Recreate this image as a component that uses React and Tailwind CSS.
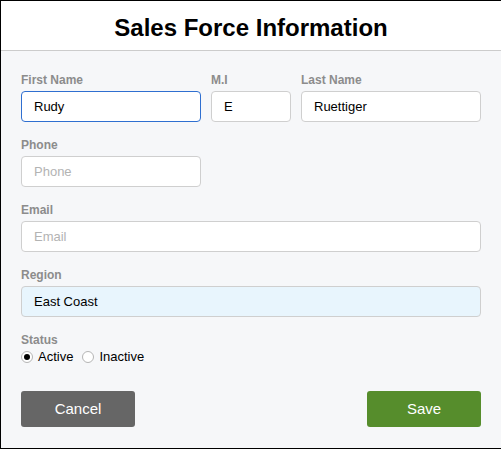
import { useState } from "react";

const labelCls = "block text-[12px] leading-[14px] font-bold text-[#8c8c8c] mb-1";
const inputCls =
  "block h-[31px] w-full rounded-[4px] border border-[#cfcfcf] bg-white px-[12px] text-[13px] text-black placeholder:text-[#b3b3b3] outline-none";

function Field({ label, className = "", inputClass = "", ...props }) {
  return (
    <div className={className}>
      <label className={labelCls}>{label}</label>
      <input className={`${inputCls} ${inputClass}`} {...props} />
    </div>
  );
}

function Radio({ checked, label, onClick }) {
  return (
    <button type="button" onClick={onClick} className="flex items-center gap-[5px]">
      <span className="flex h-[12px] w-[12px] items-center justify-center rounded-full border border-[#b5b5b5] bg-white">
        {checked && <span className="h-[6px] w-[6px] rounded-full bg-black" />}
      </span>
      <span className="text-[13px] leading-4 text-black">{label}</span>
    </button>
  );
}

export default function App() {
  const [status, setStatus] = useState("active");

  return (
    <div
      className="h-[449px] w-[501px] border-t border-l border-b border-black bg-[#f6f7f9]"
      style={{ fontFamily: '"Liberation Sans", Arial, sans-serif' }}
    >
      <div className="h-[50px] border-b border-[#cccccc] bg-white pt-[13px] text-center">
        <h1 className="text-[24px] leading-[28px] font-bold text-black">Sales Force Information</h1>
      </div>

      <div className="px-5 pt-[22px] pb-5">
        <div className="flex gap-[10px]">
          <Field label="First Name" className="w-[180px]" defaultValue="Rudy" inputClass="!border-[#2f6fd0]" />
          <Field label="M.I" className="w-[80px]" defaultValue="E" />
          <Field label="Last Name" className="w-[180px]" defaultValue="Ruettiger" />
        </div>

        <Field label="Phone" className="mt-4 w-[180px]" placeholder="Phone" />
        <Field label="Email" className="mt-4" placeholder="Email" />
        <Field label="Region" className="mt-4" defaultValue="East Coast" inputClass="!bg-[#e8f5fd]" />

        <div className="mt-4">
          <div className="text-[12px] leading-[14px] font-bold text-[#8c8c8c] mb-[2px]">Status</div>
          <div className="flex items-center gap-[9px]">
            <Radio checked={status === "active"} label="Active" onClick={() => setStatus("active")} />
            <Radio checked={status === "inactive"} label="Inactive" onClick={() => setStatus("inactive")} />
          </div>
        </div>

        <div className="mt-[26px] flex justify-between">
          <button className="h-[36px] w-[114px] rounded-[3px] bg-[#666666] text-[15px] text-white">Cancel</button>
          <button className="h-[36px] w-[114px] rounded-[3px] bg-[#568d2c] text-[15px] text-white">Save</button>
        </div>
      </div>
    </div>
  );
}
